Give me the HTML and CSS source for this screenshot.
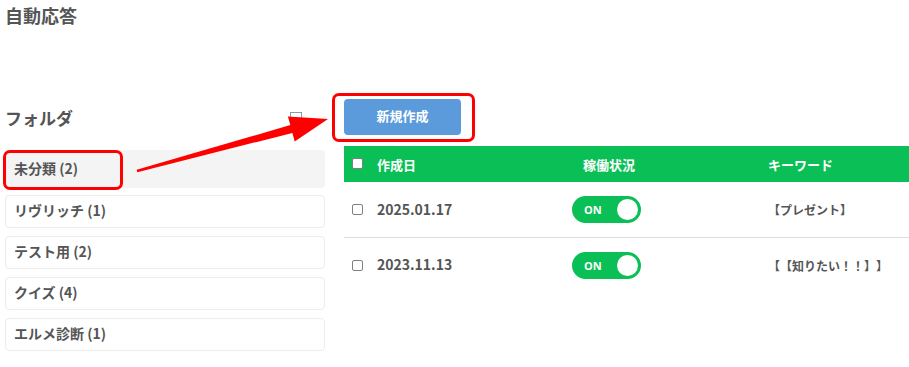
FILE: index.html
```html
<!DOCTYPE html>
<html lang="ja">
<head>
<meta charset="utf-8">
<title>自動応答</title>
<link rel="stylesheet" href="styles.css">
</head>
<body>
<div class="page">
  <h1 class="title">自動応答</h1>
  <div class="main">
    <aside class="folders">
      <div class="folders-head">
        <span class="folders-title">フォルダ</span>
        <span class="folder-add"></span>
      </div>
      <ul class="folder-list">
        <li class="folder active">未分類 (2)<span class="mark mark-folder"></span></li>
        <li class="folder">リヴリッチ (1)</li>
        <li class="folder">テスト用 (2)</li>
        <li class="folder">クイズ (4)</li>
        <li class="folder">エルメ診断 (1)</li>
      </ul>
    </aside>
    <section class="content">
      <div class="toolbar">
        <button class="btn-new">新規作成<span class="mark mark-btn"></span></button>
      </div>
      <div class="table">
        <div class="row head">
          <div class="cell"><span class="check check-head"></span></div>
          <div class="cell">作成日</div>
          <div class="cell status-head">稼働状況</div>
          <div class="cell">キーワード</div>
        </div>
        <div class="row">
          <div class="cell"><span class="check"></span></div>
          <div class="cell date">2025.01.17</div>
          <div class="cell"><span class="toggle"><span class="toggle-label">ON</span><span class="knob"></span></span></div>
          <div class="cell kw">【プレゼント】</div>
        </div>
        <div class="row">
          <div class="cell"><span class="check"></span></div>
          <div class="cell date">2023.11.13</div>
          <div class="cell"><span class="toggle"><span class="toggle-label">ON</span><span class="knob"></span></span></div>
          <div class="cell kw">【【知りたい！！】】</div>
        </div>
      </div>
    </section>
  </div>
  <svg class="arrow" width="909" height="367" viewBox="0 0 909 367">
    <polygon fill="#ff0000" points="137.3,172.2 292.4,132.9 294.7,141.5 328,119 287.9,116.5 290.3,125.1 136.7,169.8"/>
  </svg>
</div>
</body>
</html>
```

FILE: styles.css
```css
* { box-sizing: border-box; }
html, body { margin: 0; padding: 0; background: #fff; }
body {
  font-family: "Noto Sans CJK JP", "Noto Sans", sans-serif;
  color: #555;
  text-spacing-trim: space-all;
}
.page {
  position: relative;
  width: 909px;
  height: 367px;
  padding: 0 0 0 5px;
  overflow: hidden;
}
.title {
  margin: 0;
  padding-top: 2px;
  font-size: 18px;
  line-height: 26px;
  font-weight: 700;
  color: #555;
}
.main {
  display: flex;
  margin-top: 71px;
}
.folders {
  width: 320px;
  flex: none;
}
.folders-head {
  height: 51px;
  display: flex;
  align-items: flex-start;
  justify-content: space-between;
  padding-right: 23px;
  padding-top: 7px;
}
.folders-title {
  font-size: 17px;
  line-height: 24px;
  font-weight: 700;
  color: #555;
}
.folder-add {
  width: 12px;
  height: 12px;
  margin-top: 6px;
  border: 1px solid #8a9aa8;
  background: #fff;
}
.folder-list {
  list-style: none;
  margin: 0;
  padding: 0;
}
.folder {
  position: relative;
  height: 33px;
  margin-bottom: 8px;
  border: 1px solid #ececec;
  border-radius: 4px;
  padding-left: 8px;
  padding-bottom: 3px;
  display: flex;
  align-items: center;
  font-size: 14px;
  font-weight: 700;
  color: #555;
}
.folder.active {
  height: 38px;
  margin-bottom: 7px;
  background: #f4f4f4;
  border-color: #f4f4f4;
}
.mark {
  position: absolute;
  border: 3px solid #ff0000;
  border-radius: 7px;
  pointer-events: none;
}
.mark-folder {
  left: -3px;
  top: -1px;
  width: 120px;
  height: 40px;
}
.content {
  flex: 1;
  margin-left: 19px;
  margin-right: -5px;
}
.toolbar {
  height: 47px;
}
.btn-new {
  position: relative;
  width: 117px;
  height: 36px;
  border: none;
  border-radius: 4px;
  background: #5b9bdc;
  color: #fff;
  font-family: "Noto Sans CJK JP", sans-serif;
  font-size: 13px;
  font-weight: 700;
  padding: 0;
  padding-bottom: 3px;
}
.mark-btn {
  left: -12px;
  top: -6px;
  width: 143px;
  height: 49px;
}
.table {
  width: 100%;
}
.row {
  display: grid;
  grid-template-columns: 33px 195px 196px 1fr;
  height: 55px;
  align-items: center;
}
.row + .row:not(.head) { border-top: 1px solid #dcdcdc; }
.row.head + .row { border-top: none; }
.row.head {
  height: 36px;
  background: #0abf55;
  color: #fff;
  font-size: 13px;
  font-weight: 700;
}
.cell {
  display: flex;
  align-items: center;
}
.status-head {
  padding-left: 11px;
}
.check {
  display: block;
  width: 11px;
  height: 11px;
  margin-left: 8px;
  border: 1px solid #7f7f7f;
  border-radius: 2px;
  background: #fff;
}
.check-head {
  margin-top: -2px;
}
.date {
  font-size: 14px;
  font-weight: 700;
  color: #555;
  padding-bottom: 2px;
}
.toggle {
  position: relative;
  display: flex;
  align-items: center;
  width: 69px;
  height: 27px;
  border-radius: 14px;
  background: #0abf55;
}
.toggle-label {
  margin-left: 12px;
  color: #fff;
  font-size: 11px;
  font-weight: 700;
  font-family: "Open Sans", sans-serif;
}
.knob {
  position: absolute;
  right: 3px;
  top: 3px;
  width: 21px;
  height: 21px;
  border-radius: 50%;
  background: #fff;
}
.kw {
  font-size: 12px;
  font-weight: 700;
  color: #555;
}
.arrow {
  position: absolute;
  left: 0;
  top: 0;
  pointer-events: none;
}
```
